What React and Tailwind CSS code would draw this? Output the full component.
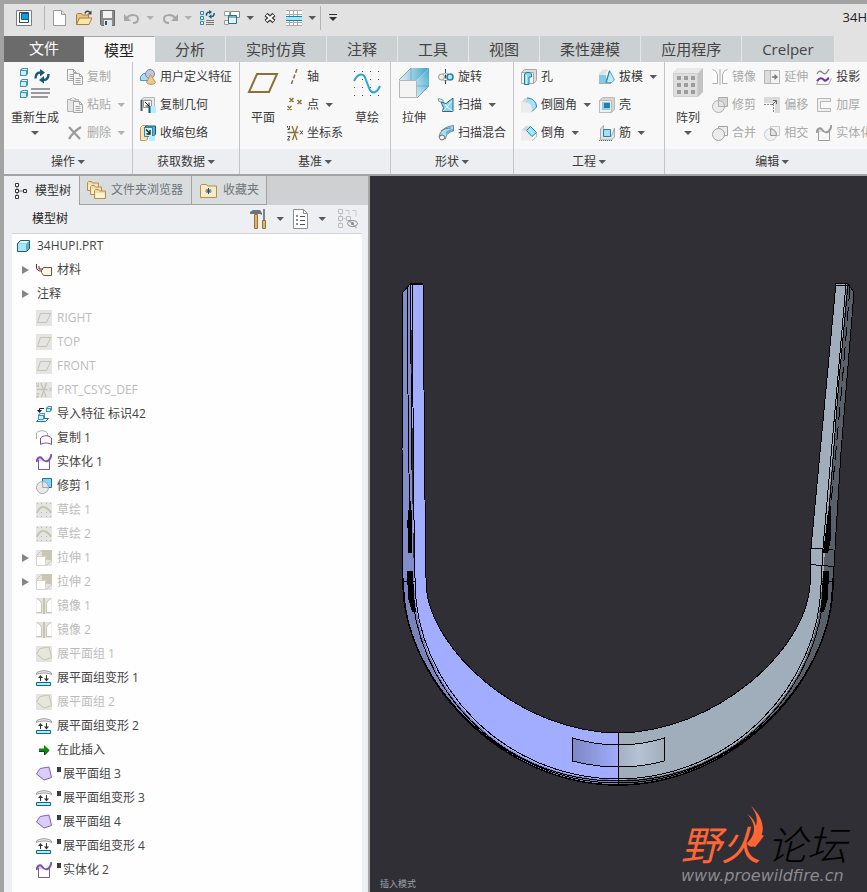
import React, { useState } from "react";
import clsx from "clsx";

function Svg({ size = 16, children }) {
  return (
    <svg width={size} height={size} viewBox={`0 0 ${size} ${size}`} fill="none" className="shrink-0" aria-hidden="true">
      {children}
    </svg>
  );
}

function Caret({ className = "text-[#595959]" }) {
  return (
    <svg width="10" height="8" viewBox="0 0 10 8" className={clsx("shrink-0", className)} aria-hidden="true">
      <path d="M2.500 2H10L6.250 6z" fill="currentColor" />
    </svg>
  );
}

/* ---------- shared glyphs ---------- */

const Cube = ({ x, y, s = 6 }) => (
  <g transform={`translate(${x} ${y})`}>
    <path d={`M0 2L2 0H${s + 2}V${s}L${s} ${s + 2}H0z`} fill="#3d93b8" />
    <path d={`M1 3H${s}V${s + 1}H1z`} fill="#c5f0fc" />
    <path d={`M1.500 2l1-1h${s - 1}l-1 1z`} fill="#fff" />
  </g>
);

const Cycle = ({ x, y, k = 1 }) => (
  <g transform={`translate(${x} ${y}) scale(${k})`} stroke="#17597a" strokeWidth="2.400" fill="none">
    <path d="M1.500 9.500C1.500 5.500 3 3.500 6.500 3.500M14.500 5c0 4-1.500 6-5 6" />
    <path d="M6 0l5 3.500L6 7.500zM10 14.500L5 11l5-4z" fill="#17597a" stroke="none" />
  </g>
);

const Sheet = ({ x, y, c = "#a5a5a5" }) => (
  <g transform={`translate(${x} ${y})`}>
    <path d="M.5.500h6l3 3v8h-9z" fill="#f5f5f5" stroke={c} />
    <path d="M6.500.500v3h3M2.500 5.500h5M2.500 7.500h5M2.500 9.500h5" stroke={c} />
  </g>
);

const Folder = ({ x = 0, y = 0 }) => (
  <g transform={`translate(${x} ${y})`}>
    <path d="M.5 9.500v-8l1-1h3l1 1.500h6v7.500z" fill="#f3dca4" stroke="#b08f56" />
    <path d="M1.500 9V4h9v5z" fill="#fdf3d3" />
  </g>
);

const Solidify = ({ c = "#7a55a5", f = "#ddd3ee" }) => (
  <Svg>
    <path d="M2 5c3-5 5 4 8 2 2-1 3-3 3-5v5H2z" fill={f} />
    <path d="M2.500 6v9.500h11V5" stroke={c} />
    <path d="M.5 8C1 4 4 1.500 6 4.500S9 8 11.500 7 15 3 15.500 0" stroke={c} strokeWidth="2" />
  </Svg>
);

const Trim = ({ fill = "#7fd6fb", line = "#20779b", circle = "#a9a9a9" }) => (
  <Svg>
    <path d="M6.500.500h9v9h-9z" fill={fill} stroke={line} />
    <circle cx="6.500" cy="9.500" r="6" fill="#e7e7e7" fillOpacity=".9" stroke={circle} />
    <path d="M6.500 4v5.500h6" stroke={circle} />
  </Svg>
);

const Flatten = () => (
  <Svg>
    <path d="M.5 4.500V3C4 0 12 0 15.500 3v1.500C12 2.500 4 2.500.5 4.500z" fill="#efefef" stroke="#9a9a9a" />
    <path d="M.5 12.500h14v3H.5z" fill="#a4ecff" stroke="#1a6685" />
    <path d="M4.500 6v5M10.500 5v5" stroke="#333" />
    <path d="M2 8l2.500-3L7 8zM8 8.500h5l-2.500 3z" fill="#333" />
  </Svg>
);

const Quilt = ({ off }) => (
  <Svg>
    {off && <path d="M0 0h16v16H0z" fill="#e4e4e4" />}
    <path d="M4 2.500L13 1l2.500 10.500L8 14 .5 8z" fill={off ? "#e6e6dd" : "#d7cdf6"} stroke={off ? "#c6c3af" : "#8660a8"} />
  </Svg>
);

const PlaneOff = () => (
  <Svg>
    <path d="M0 0h16v16H0z" fill="#e4e4e4" />
    <path d="M4.500 3.500h10l-4 9h-9z" stroke="#c6c3af" />
  </Svg>
);

const SketchOff = () => (
  <Svg>
    <path d="M0 0h16v16H0z" fill="#e4e4e4" />
    <path d="M1 1.500h1M5 1.500h1M10 1.500h1M14 1.500h1M1 14.500h1M5 14.500h1M10 14.500h1M14 14.500h1M5 10.500h1M10 10.500h1" stroke="#b5b5b5" />
    <path d="M1 11C4 3 10 3 15 11" stroke="#c6c3af" strokeWidth="2" />
  </Svg>
);

const ExtrudeOff = () => (
  <Svg>
    <path d="M0 0h16v16H0z" fill="#e4e4e4" />
    <path d="M6 0h10v10h-6V6H6z" fill="#c9c6b4" />
    <path d="M0 6l6-6M10 16l6-6" stroke="#c9c6b4" />
    <path d="M.5 6.500h9v9h-9z" fill="#fff" stroke="#d8d6c8" />
  </Svg>
);

const Mirror = ({ off, c = "#adadad" }) => (
  <Svg>
    {off && <path d="M0 0h16v16H0z" fill="#e4e4e4" />}
    <path d="M.5.500c3 1 5 3 5 6v8h-5M15.500.500c-3 1-5 3-5 6v8h5" fill="#fff" stroke={c} />
    <path d="M8 0v16" stroke={c} strokeWidth={off ? 2 : 1} />
  </Svg>
);

const CsysMark = ({ c = "#8c7037", t = "#4b4b4b", bg }) => (
  <Svg>
    {bg && <path d="M0 0h16v16H0z" fill={bg} />}
    <path d="M.5 7.500h11M5 1l5 14M10.500 1l-5 14" stroke={c} strokeWidth="1.300" />
    <path d="M.5 1v1.500l1 1 1-1V1M2.500 2.500v2h-2M.5 11.500h2.500L.5 15h2.500M13 5.500l3 4M16 5.500l-3 4" stroke={t} />
  </Svg>
);

/* ---------- quick access ---------- */

const qat = {
  screen: (
    <Svg>
      <path d="M.5.500h15v15H.5z" fill="#fff" stroke="#7c7c7c" />
      <path d="M3.500 2.500h9v10h-9z" fill="#fff" stroke="#3c4c55" />
      <path d="M5.500 3.500h7v6h-7z" fill="#0f9ddf" stroke="#135d80" />
    </Svg>
  ),
  doc: (
    <Svg>
      <path d="M1.500.500h8l4 4v11h-12z" fill="#fdfdfd" stroke="#9a9a9a" />
      <path d="M9.500.500v4h4" fill="#ddd" stroke="#9a9a9a" />
    </Svg>
  ),
  open: (
    <Svg>
      <path d="M.5 14.500V4.500l1-1h4l1 1.500h6v3" fill="#e9c77f" stroke="#a57f3c" />
      <path d="M.5 14.500L3.500 8H16l-3 6.500z" fill="#fbe5ad" stroke="#a57f3c" />
      <path d="M9 3.500C9.500 1 12 .5 14 2.500" stroke="#444" strokeWidth="1.500" />
      <path d="M11.500 4.500H15.500V.5z" fill="#444" />
    </Svg>
  ),
  save: (
    <Svg>
      <path d="M.5.500h14v15H1.500l-1-1z" fill="#8b8b8b" stroke="#6a6a6a" />
      <path d="M3 1h9v7H3z" fill="#f2f2f2" />
      <path d="M4 10h8v6H4z" fill="#dfe7ec" />
      <path d="M5 11h2v4H5z" fill="#4c4c4c" />
    </Svg>
  ),
  undo: (
    <Svg>
      <path d="M3 8c3-4 11-4 11 1 0 3-2 4-5 4" stroke="#a6a6a6" strokeWidth="2" />
      <path d="M0 4v7h7z" fill="#a6a6a6" />
    </Svg>
  ),
  redo: (
    <Svg>
      <path d="M13 8C10 4 2 4 2 9c0 3 2 4 5 4" stroke="#a6a6a6" strokeWidth="2" />
      <path d="M16 4v7H9z" fill="#a6a6a6" />
    </Svg>
  ),
  regen: (
    <Svg>
      <path d="M.5 1.500h3v3h-3zM.5 6.500h3v3h-3zM.5 11.500h3v3h-3z" fill="#e7fbff" stroke="#2b86ac" />
      <Cycle x={5.500} y={0} k={0.6} />
      <path d="M6 10.500h8M6 12.500h8M6 14.500h8" stroke="#777" />
    </Svg>
  ),
  windows: (
    <Svg>
      <path d="M.5 1.500h5v4h-5zM.5 10.500h4v4h-4z" fill="#fff" stroke="#9c9c9c" />
      <path d="M6.500 1.500h9v6h-9z" fill="#fff" stroke="#888" />
      <path d="M4.500 5.500h8v8h-8z" fill="#dff6fd" stroke="#1f7390" />
      <path d="M5 7h7" stroke="#1f7390" />
    </Svg>
  ),
  close: (
    <Svg>
      <path d="M4 4.500l8 7M12 4.500l-8 7" stroke="#3a3a3a" strokeWidth="4.500" />
      <path d="M4.500 5l7 6M11.500 5l-7 6" stroke="#fff" strokeWidth="2" />
    </Svg>
  ),
  grid: (
    <Svg>
      <path d="M0 0h16v16H0z" fill="#fff" />
      <path d="M0 .5h16M0 4.500h16M0 12.500h16M0 15.500h16M3.500 0v16M7.500 0v16M11.500 0v16" stroke="#ababab" />
      <path d="M0 6.500h16M0 10.500h16" stroke="#1785a9" />
      <path d="M0 7h16v3H0z" fill="#a6e5f8" />
    </Svg>
  ),
};

/* ---------- ribbon ---------- */

const icons = {
  copy: (
    <Svg>
      <Sheet x={0} y={0} />
      <Sheet x={6} y={4} />
    </Svg>
  ),
  paste: (
    <Svg>
      <path d="M.5 2.500h11v12H.5z" fill="#e6e6e6" stroke="#b4b4b4" />
      <path d="M3.500 3.500V1.500h1.500L6 .5l1 1h1.500v2z" fill="#f4f4f4" stroke="#b4b4b4" />
      <Sheet x={6} y={4} />
    </Svg>
  ),
  del: (
    <Svg>
      <path d="M2 2l11 12M14 2C9 5 5 9 2 14" stroke="#9a9a9a" strokeWidth="2.200" />
    </Svg>
  ),
  udf: (
    <Svg>
      <path d="M.5 7.500l3-3h7v7h-10z" fill="#a7dcf2" stroke="#4b97b8" />
      <circle cx="10" cy="5" r="4.500" fill="#c3c8de" stroke="#7d83a6" />
      <path d="M10.500 5.500l5 8c-1 2.500-8 2.500-9 0z" fill="#ecca8e" stroke="#b8935a" />
    </Svg>
  ),
  copyGeom: (
    <Svg>
      <path d="M1 3l3-2.500h10.500v9H11V3z" fill="#ebebeb" stroke="#b5b5b5" />
      <path d="M1.500 3v11" stroke="#4a555c" strokeWidth="2" />
      <path d="M3.500 3.500h8v7h-8z" fill="#fff" stroke="#999" />
      <path d="M5 5l4 4M9 5.500V9H5.500" stroke="#222" />
      <path d="M10 9h6v7h-6z" fill="#b4efff" />
      <path d="M9.500 9v7" stroke="#17597a" strokeWidth="2" />
    </Svg>
  ),
  shrink: (
    <Svg>
      <path d="M.5 2.500l2-2h5v14l-2 1h-5z" fill="#f6e3b8" stroke="#b99a63" />
      <path d="M4.500 2.500l1.500-1.500h9.500v8l-2 2z" fill="#58aed0" stroke="#17597a" />
      <path d="M4.500 2.500h8v9h-8z" fill="#c4f0fc" stroke="#3286a6" />
      <path d="M6 4.500l4 4M10 5v4H6.500" stroke="#222" strokeWidth="1.300" />
      <path d="M9 11h6v5H9z" fill="#b4efff" />
    </Svg>
  ),
  axis: (
    <Svg>
      <path d="M10 0L4 16" stroke="#8c7037" strokeWidth="1.500" strokeDasharray="4 2" />
    </Svg>
  ),
  points: (
    <Svg>
      <path d="M2.500 1l4 4M6.500 1l-4 4M10.500 3l4 4M14.500 3l-4 4M.5 9l4 4M4.500 9l-4 4" stroke="#8c7037" strokeWidth="1.500" />
    </Svg>
  ),
  csys: <CsysMark />,
  revolve: (
    <Svg>
      <circle cx="3.500" cy="8" r="3" fill="#eee" stroke="#999" />
      <circle cx="12" cy="8" r="3" fill="#b5e6f7" stroke="#1b7fa8" strokeWidth="1.500" />
      <path d="M4 5c2-1 6-1 8 0M4 11c2 1 6 1 8 0" stroke="#9fc0cc" />
      <path d="M7.500 0v16" stroke="#444" strokeDasharray="4 1.500" />
    </Svg>
  ),
  sweep: (
    <Svg>
      <path d="M.5 1.500l4.500 1.500v3l-4.500-2z" fill="#ddf1f7" stroke="#6aa3ba" />
      <path d="M3 5l5 1.500L15 1v13.500H4.500l1-4z" fill="#8fd2ea" stroke="#1c6f93" />
      <path d="M5 14l4-4 5.500 4M9 10l-2-3M9 10l5-6" stroke="#e6f8fd" />
    </Svg>
  ),
  blend: (
    <Svg>
      <path d="M1 12C2 6 6 2 15.500.500V6C11 7 8 9 7.500 14z" fill="#a9dcef" stroke="#5d8ba0" />
      <path d="M3 6c3-2 6-3 10-3" stroke="#777" />
      <path d="M8 7c2-2 4-3 7-3v2C11 7 8 9 8 12z" fill="#5fb3d3" />
      <circle cx="4" cy="12.500" r="2.500" fill="#fff" stroke="#666" />
    </Svg>
  ),
  hole: (
    <Svg>
      <path d="M.5 3.500l3-3h12v11l-3 3H.5z" fill="#ddd" stroke="#a8a8a8" />
      <path d="M.5 3.500h12v11H.5z" fill="#f4f4f4" stroke="#a8a8a8" />
      <path d="M3.500 15.500V5c1-2 6-2 7 0v3H8v7.500z" fill="#8adaf5" stroke="#1c7da2" />
      <path d="M5.500 15V6" stroke="#dff6fd" />
    </Svg>
  ),
  round: (
    <Svg>
      <path d="M0 5.500h6c3 1 5 4 5 10H0z" fill="#ececec" />
      <path d="M0 5.500L4 1h5L6 5.500z" fill="#d8d8d8" />
      <path d="M6 1c5-.5 9.500 3.500 9.500 9L11 14c0-5-2-8-6-8.500z" fill="#a8e1f5" />
      <path d="M6 1c5 0 9.500 3.500 9.500 9L11 14.500" stroke="#2681a5" />
    </Svg>
  ),
  chamfer: (
    <Svg>
      <path d="M0 5.500h6l5 5v5H0z" fill="#ececec" />
      <path d="M0 5.500L5 1h5L6 5.500z" fill="#d5d5d5" />
      <path d="M9.500 1.500l6 6-4.500 4-5.500-6z" fill="#9aeaff" stroke="#2681a5" />
      <path d="M15.500 8v4L11 15.500" stroke="#bbb" />
    </Svg>
  ),
  draft: (
    <Svg>
      <path d="M0 6V4l4-3.500h5L6 6z" fill="#e2e2e2" />
      <path d="M0 6h7v8H0z" fill="#7fcbe9" />
      <path d="M6.500 13.500l4-12 5 9.500-3 2.500z" fill="#bfe9f6" stroke="#5ba3c0" />
      <path d="M10.500 2l-3 11" stroke="#2b7fa5" />
      <path d="M0 14.500h12" stroke="#aaa" />
    </Svg>
  ),
  shell: (
    <Svg>
      <path d="M.5 3.500l3-3h12v12l-3 3H.5z" fill="#d4d4d4" stroke="#bababa" />
      <path d="M.5 3.500h12v12H.5z" fill="#f0f0f0" stroke="#bababa" />
      <path d="M3 5h8v8H3z" fill="#8fcfe6" />
      <path d="M5 6h6v5H5z" fill="#2680a5" />
    </Svg>
  ),
  rib: (
    <Svg>
      <path d="M1.500 14V4l3-3.500V11h8L15.500 3v9l-3 3H1z" fill="#e2e2e2" stroke="#aaa" />
      <path d="M4.500 4.500h7v7h-7z" fill="#9fe0f5" stroke="#2b7fa5" />
      <path d="M0 15.500h13" stroke="#666" strokeDasharray="1 1" />
    </Svg>
  ),
  mirror: <Mirror />,
  trim: <Trim fill="#d5d5d5" line="#aaa" circle="#b0b0b0" />,
  merge: (
    <Svg>
      <path d="M6.500 1.500h9v9h-3a6 6 0 0 0-6-6.500z" fill="#ececec" stroke="#a3a3a3" />
      <circle cx="6.500" cy="9.500" r="6" fill="#ececec" stroke="#a3a3a3" />
    </Svg>
  ),
  extend: (
    <Svg>
      <path d="M.5 1.500h15v13H.5z" fill="#f3f3f3" stroke="#b5b5b5" />
      <path d="M1 2h5v12H1z" fill="#dcdcdc" />
      <path d="M6.500 2v12" stroke="#b5b5b5" />
      <path d="M8 8h3" stroke="#777" strokeWidth="1.500" />
      <path d="M10.500 5v6L14 8z" fill="#777" />
    </Svg>
  ),
  offset: (
    <Svg>
      <path d="M0 0h16v16h-5V6H0z" fill="#dadada" />
      <path d="M0 7.500h9.500V16" stroke="#888" strokeDasharray="2 1" />
      <path d="M8 8l4-4M9 3.500h3.500V7" stroke="#666" />
    </Svg>
  ),
  intersect: (
    <Svg>
      <path d="M6.500 1.500h9v9h-9z" fill="#f3f3f3" stroke="#c9c9c9" />
      <circle cx="6.500" cy="9.500" r="6" fill="#efefef" fillOpacity=".6" stroke="#c9c9c9" />
      <path d="M6.500 4v6.500h6C12.500 7 10 4 6.500 4z" fill="#e2e2e2" stroke="#999" />
    </Svg>
  ),
  project: (
    <Svg>
      <path d="M1 5c2-4 4-3 6-1s4 0 6-4" stroke="#888" strokeWidth="1.300" />
      <path d="M.5 15.500L3 10.500M12.500 15.500l3-6M.5 15.500h12" stroke="#aaa" />
      <path d="M1 12c3-4 5-3 7-1s3-1 5-2" stroke="#6b2fb3" strokeWidth="2" />
    </Svg>
  ),
  thicken: (
    <Svg>
      <path d="M14.500 1.500H1.500v13h13v-3H4.500v-7h10z" fill="#f0f0f0" stroke="#b5b5b5" />
    </Svg>
  ),
  solidify: <Solidify c="#9b9b9b" f="#dcdcdc" />,
};

const bigIcons = {
  regen: (
    <Svg size={32}>
      <Cube x={1} y={1} />
      <Cube x={1} y={12} />
      <Cube x={1} y={23} />
      <Cycle x={15} y={2} />
      <path d="M12 22h19M12 26h19M12 30h17" stroke="#9a9a9a" strokeWidth="2" />
    </Svg>
  ),
  plane: (
    <Svg size={32}>
      <path d="M10 7h20l-8 18H2z" stroke="#8c7037" strokeWidth="2" />
    </Svg>
  ),
  sketch: (
    <Svg size={32}>
      <path
        d="M3 4.500h26M3 12.500h26M3 20.500h26M3 28.500h26"
        stroke="#555"
        strokeDasharray="1 7"
      />
      <path d="M3 14C7 6 13 5 15 13l3 8c3 7 8 5 11-2" stroke="#2fa5d6" strokeWidth="2" />
    </Svg>
  ),
  extrude: (
    <Svg size={32}>
      <defs>
        <linearGradient id="ext" x1="0" y1="0" x2="1" y2="0">
          <stop offset="0" stopColor="#dff4fb" />
          <stop offset="1" stopColor="#3f9fc4" />
        </linearGradient>
        <linearGradient id="extSide" x1="1" y1="0" x2="0" y2="1">
          <stop offset="0" stopColor="#4ea9cb" />
          <stop offset="1" stopColor="#c4ecf8" />
        </linearGradient>
      </defs>
      <path d="M1 13L13 1h18L19 13z" fill="url(#ext)" />
      <path d="M19 13L31 1v18L19 31z" fill="url(#extSide)" />
      <path d="M13 1v12M19 19h12" stroke="#2b8fb8" strokeOpacity=".5" />
      <path d="M1.500 13.500h17v17h-17z" fill="#f4f4f4" stroke="#b5b5b5" />
      <path d="M1 13L13 1M19 31l12-12" stroke="#9a9a9a" />
    </Svg>
  ),
  pattern: (
    <Svg size={32}>
      <path d="M1 6l5-5h25v24l-5 5z" fill="#c3c3c3" />
      <path d="M1 6l5-5h25l-5 5z" fill="#e9e9e9" />
      <path d="M1.500 6.500h24v23h-24z" fill="#dedede" stroke="#cfcfcf" />
      <path d="M7 9v18M14 9v18M21 9v18" stroke="#9c9c9c" strokeWidth="4" strokeDasharray="4 3" />
    </Svg>
  ),
};

const groups = [
  {
    name: "操作",
    cols: [
      { big: true, icon: "regen", label: "重新生成", menu: true },
      [
        { icon: "copy", label: "复制", off: true },
        { icon: "paste", label: "粘贴", off: true, menu: true },
        { icon: "del", label: "删除", off: true, menu: true },
      ],
    ],
  },
  {
    name: "获取数据",
    cols: [
      [
        { icon: "udf", label: "用户定义特征" },
        { icon: "copyGeom", label: "复制几何" },
        { icon: "shrink", label: "收缩包络" },
      ],
    ],
  },
  {
    name: "基准",
    cols: [
      { big: true, icon: "plane", label: "平面" },
      [
        { icon: "axis", label: "轴" },
        { icon: "points", label: "点", menu: true },
        { icon: "csys", label: "坐标系" },
      ],
      { big: true, icon: "sketch", label: "草绘" },
    ],
  },
  {
    name: "形状",
    cols: [
      { big: true, icon: "extrude", label: "拉伸" },
      [
        { icon: "revolve", label: "旋转" },
        { icon: "sweep", label: "扫描", menu: true },
        { icon: "blend", label: "扫描混合" },
      ],
    ],
  },
  {
    name: "工程",
    cols: [
      [
        { icon: "hole", label: "孔" },
        { icon: "round", label: "倒圆角", menu: true },
        { icon: "chamfer", label: "倒角", menu: true },
      ],
      [
        { icon: "draft", label: "拔模", menu: true },
        { icon: "shell", label: "壳" },
        { icon: "rib", label: "筋", menu: true },
      ],
    ],
  },
  {
    name: "编辑",
    cols: [
      { big: true, icon: "pattern", label: "阵列", menu: true },
      [
        { icon: "mirror", label: "镜像", off: true },
        { icon: "trim", label: "修剪", off: true },
        { icon: "merge", label: "合并", off: true },
      ],
      [
        { icon: "extend", label: "延伸", off: true },
        { icon: "offset", label: "偏移", off: true },
        { icon: "intersect", label: "相交", off: true },
      ],
      [
        { icon: "project", label: "投影" },
        { icon: "thicken", label: "加厚", off: true },
        { icon: "solidify", label: "实体化", off: true },
      ],
    ],
  },
];

const tabs = ["分析", "实时仿真", "注释", "工具", "视图", "柔性建模", "应用程序", "Crelper"];

function QuickButton({ icon, label, menu, off }) {
  return (
    <button type="button" aria-label={label} className="flex items-center gap-1">
      {qat[icon]}
      {menu && <Caret className={off ? "text-[#b0b0b0]" : "text-[#595959]"} />}
    </button>
  );
}

function QuickBar() {
  return (
    <header className="flex h-8 items-center overflow-hidden bg-[#e2e2e2] pb-1 pl-3">
      <QuickButton icon="screen" label="窗口" />
      <span className="ml-3 mr-[7px] h-6 w-px shrink-0 bg-[#b5b5b5]" />
      <div className="flex items-center gap-2">
        <QuickButton icon="doc" label="新建" />
        <QuickButton icon="open" label="打开" />
        <QuickButton icon="save" label="保存" />
        <QuickButton icon="undo" label="撤消" menu off />
        <QuickButton icon="redo" label="重做" menu off />
        <QuickButton icon="regen" label="重新生成" />
        <QuickButton icon="windows" label="窗口列表" menu />
        <QuickButton icon="close" label="关闭" />
        <QuickButton icon="grid" label="表" menu />
      </div>
      <span className="mr-2 ml-1 h-6 w-px shrink-0 bg-[#b5b5b5]" />
      <button type="button" aria-label="自定义">
        <svg width="8" height="8" viewBox="0 0 8 8" aria-hidden="true">
          <path d="M0 .5h8" stroke="#333" />
          <path d="M0 3h8L4 7z" fill="#333" />
        </svg>
      </button>
      <span className="ml-auto text-[13px] text-[#222]">34H</span>
    </header>
  );
}

function TabBar() {
  return (
    <nav className="flex h-[26px] overflow-hidden bg-[#e2e2e2] text-[15px] leading-6 whitespace-nowrap">
      <button type="button" className="bg-[#6b6b6b] px-[25px] pb-1 text-white">文件</button>
      <button type="button" className="border-t border-r border-t-[#a3a3a3] border-r-[#f8f8f8] bg-[#f8f8f8] px-5 text-[#222]">
        模型
      </button>
      {tabs.map((t) => (
        <button key={t} type="button" className="border-r border-[#e6e6e6] bg-[#cbd0d3] px-5 text-[#444]">
          {t}
        </button>
      ))}
    </nav>
  );
}

function BigButton({ icon, label, menu }) {
  return (
    <button type="button" className="flex min-w-8 flex-col items-center pt-1 text-[#3a3a3a]">
      {bigIcons[icon]}
      <span className="mt-[11px] leading-4">{label}</span>
      {menu && (
        <svg width="8" height="5" viewBox="0 0 8 5" className="mt-1 text-[#595959]" aria-hidden="true">
          <path d="M0 1h8L4 5z" fill="currentColor" />
        </svg>
      )}
    </button>
  );
}

function SmallButton({ icon, label, menu, off }) {
  return (
    <button
      type="button"
      disabled={off}
      className={clsx("flex h-7 items-center gap-1", off ? "text-[#a9a9a9]" : "text-[#3a3a3a]")}
    >
      {icons[icon]}
      <span>{label}</span>
      {menu && <Caret className={off ? "text-[#b0b0b0]" : "text-[#595959]"} />}
    </button>
  );
}

function Ribbon() {
  return (
    <div className="flex overflow-hidden border-b-2 border-[#a3a3a3] bg-[#f8f8f8] text-xs whitespace-nowrap">
      {groups.map((g) => (
        <section key={g.name} className="flex shrink-0 flex-col border-r border-[#c2c4c8]">
          <div className="flex h-[87px] gap-2 px-[7px] pt-px">
            {g.cols.map((c, i) =>
              c.big ? (
                <BigButton key={i} {...c} />
              ) : (
                <div key={i} className="flex flex-col items-start">
                  {c.map((b) => (
                    <SmallButton key={b.label} {...b} />
                  ))}
                </div>
              )
            )}
          </div>
          <button type="button" className="flex h-[25px] items-center justify-center bg-[#edeef1] text-[#3a3a3a]">
            {g.name}
            <Caret />
          </button>
        </section>
      ))}
    </div>
  );
}

/* ---------- model tree ---------- */

const treeIcons = {
  material: (
    <Svg>
      <path d="M.5 2v3c0 3 2 4 5 4" stroke="#6e1f1f" />
      <path d="M5.500 8.500l2-3h8v8h-8l-2-3z" fill="#fbf6e3" stroke="#5f5a45" />
      <path d="M3 4v3h4" stroke="#6e1f1f" />
    </Svg>
  ),
  plane: <PlaneOff />,
  csys: <CsysMark c="#c6c3af" t="#c6c3af" bg="#e4e4e4" />,
  imported: (
    <Svg>
      <Cube x={10} y={0} s={4} />
      <path d="M3.500 5V2.500H8" stroke="#222" />
      <path d="M1 4h5L3.500 7z" fill="#222" />
      <path d="M.5 15.500l3-3h9l-3 3z" fill="#d9f6fd" stroke="#1c6f93" />
      <Cube x={2} y={7} s={5} />
    </Svg>
  ),
  copy: (
    <Svg>
      <path d="M.5 9V3c3-3 8-3 11 0v3" stroke="#aaa" />
      <path d="M4.500 14.500V8c3-3 8-3 11 0v6.500c-3-2-8-2-11 0z" fill="#fff" stroke="#7a4f9d" />
    </Svg>
  ),
  solid: <Solidify />,
  trim: <Trim />,
  sketch: <SketchOff />,
  extrude: <ExtrudeOff />,
  mirror: <Mirror off c="#c6c3af" />,
  quiltOff: <Quilt off />,
  quilt: <Quilt />,
  flatten: <Flatten />,
  insert: (
    <Svg>
      <path d="M3 6.500h5V3l5.500 5L8 13.500V10H3z" fill="#0b8a0b" />
      <path d="M3 9.500h5.500v3.500L13 8.500" stroke="#173d17" />
    </Svg>
  ),
};

const items = [
  { icon: "material", label: "材料", open: true },
  { label: "注释", open: true },
  { icon: "plane", label: "RIGHT", off: true },
  { icon: "plane", label: "TOP", off: true },
  { icon: "plane", label: "FRONT", off: true },
  { icon: "csys", label: "PRT_CSYS_DEF", off: true },
  { icon: "imported", label: "导入特征 标识42" },
  { icon: "copy", label: "复制 1" },
  { icon: "solid", label: "实体化 1" },
  { icon: "trim", label: "修剪 1" },
  { icon: "sketch", label: "草绘 1", off: true },
  { icon: "sketch", label: "草绘 2", off: true },
  { icon: "extrude", label: "拉伸 1", off: true, open: true },
  { icon: "extrude", label: "拉伸 2", off: true, open: true },
  { icon: "mirror", label: "镜像 1", off: true },
  { icon: "mirror", label: "镜像 2", off: true },
  { icon: "quiltOff", label: "展平面组 1", off: true },
  { icon: "flatten", label: "展平面组变形 1" },
  { icon: "quiltOff", label: "展平面组 2", off: true },
  { icon: "flatten", label: "展平面组变形 2" },
  { icon: "insert", label: "在此插入" },
  { icon: "quilt", label: "展平面组 3", mark: true },
  { icon: "flatten", label: "展平面组变形 3", mark: true },
  { icon: "quilt", label: "展平面组 4", mark: true },
  { icon: "flatten", label: "展平面组变形 4", mark: true },
  { icon: "solid", label: "实体化 2", mark: true },
];

function TreeRow({ item, selected, onSelect }) {
  return (
    <li
      onClick={onSelect}
      aria-selected={selected}
      role="treeitem"
      className={clsx("flex h-6 items-center pl-2", item.off ? "text-[#bcbcbc]" : "text-[#444]")}
    >
      <span className="flex w-4 shrink-0 pl-[2px]">
        {item.open && (
          <svg width="8" height="10" viewBox="0 0 8 10" aria-hidden="true">
            <path d="M0 1l7 4-7 4z" fill="#858585" />
          </svg>
        )}
      </span>
      {item.icon && treeIcons[item.icon]}
      {item.mark && <span className="mb-[9px] ml-[5px] h-[5px] w-1 bg-[#3c3c3c]" />}
      <span className={item.mark ? "ml-[2px]" : item.icon ? "ml-[5px]" : "ml-px"}>{item.label}</span>
    </li>
  );
}

function TreePanel() {
  const [selected, setSelected] = useState(null);

  return (
    <aside className="flex w-[366px] shrink-0 flex-col border-r-2 border-[#a3a3a3] bg-[#edeff2] text-xs whitespace-nowrap">
      <div className="flex h-[29px] bg-[#cfd0d2]">
        <button type="button" className="flex items-center gap-1 border-r border-[#a3a3a3] bg-[#edeff2] pr-2 pl-[11px] text-[#333]">
          <Svg>
            <path d="M.5.500h3v3h-3zM.5 6.500h3v3h-3zM.5 12.500h3v3h-3zM8.500 6.500h3v3h-3z" fill="#fff" stroke="#333" />
            <path d="M2 4v2M2 10v2M4 8h4" stroke="#777" />
          </Svg>
          模型树
        </button>
        <button type="button" className="flex items-center gap-1 border-r border-b border-[#a3a3a3] bg-[#d9dddd] pr-2 pl-[7px] text-[#6e747c]">
          <Svg size={20}>
            <Folder x={0} y={1} />
            <Folder x={3} y={5} />
            <Folder x={7} y={9} />
          </Svg>
          文件夹浏览器
        </button>
        <button type="button" className="flex items-center gap-1 border-r border-b border-[#a3a3a3] bg-[#d9dddd] px-[7px] text-[#6e747c]">
          <Svg size={20}>
            <path d="M1.500 17.500v-12l1-1h5l1 1.500h9v11.500z" fill="#f9ebc4" stroke="#b08f56" />
            <path d="M9.500 8v6M6.500 11h6M7.500 9l4 4M11.500 9l-4 4" stroke="#17597a" />
          </Svg>
          收藏夹
        </button>
      </div>

      <div className="mr-[6px] ml-2 flex h-[29px] items-center border-b border-[#d2d5d9]">
        <h2 className="flex-1 pl-5 text-[#222]">模型树</h2>
        <button type="button" aria-label="设置" className="flex items-center gap-1">
          <Svg size={20}>
            <path d="M0 3l3-2h7l2 3v2l-2-1H0z" fill="#6c737c" />
            <path d="M4.500 5.500h3v14h-3z" fill="#e0b36c" stroke="#9b7236" />
            <path d="M14 0v12" stroke="#7b828a" strokeWidth="2" />
            <path d="M12.500 11.500h3v8h-3z" fill="#e0b36c" stroke="#9b7236" />
          </Svg>
          <Caret />
        </button>
        <button type="button" aria-label="显示" className="ml-2 flex items-center gap-1">
          <Svg size={20}>
            <path d="M1.500.500h10l4 4v15h-14z" fill="#fff" stroke="#8f8f8f" />
            <path d="M11.500.500v4h4" stroke="#8f8f8f" />
            <path d="M8 7.500h5M8 11.500h5M8 15.500h5" stroke="#555" />
            <path d="M4.500 6.500h1v1h-1zM4.500 10.500h1v1h-1zM4.500 14.500h1v1h-1z" stroke="#666" />
          </Svg>
          <Caret />
        </button>
        <button type="button" aria-label="隐藏" className="mr-1 ml-3" disabled>
          <Svg size={20}>
            <path d="M.5.500h4v4h-4zM.5 7.500h4v4h-4zM.5 14.500h4v4h-4zM8.500 7.500h4v4h-4z" stroke="#bdbdbd" />
            <path d="M7 1.500h4v4M14 1.500h4v6M2.500 5v2M2.500 12v2M5 9.500h3" stroke="#cbcbcb" />
            <ellipse cx="14.500" cy="14.500" rx="5" ry="3" fill="#eee" stroke="#888" />
            <path d="M10.500 11l8 8" stroke="#888" />
            <circle cx="14.500" cy="14.500" r="1.500" fill="#888" />
          </Svg>
        </button>
      </div>

      <ul role="tree" className="mr-[6px] ml-2 flex-1 bg-[#fefefe]">
        <li role="treeitem" className="flex h-6 items-center gap-1 pl-[5px] text-[#444]">
          <Svg>
            <path d="M.5 5.500l3-3h9v8l-3 3H.5z" fill="#54b0d6" stroke="#20607e" />
            <path d="M1 6h8v7H1z" fill="#a9e6fb" />
            <path d="M1.500 5.500l2.500-2.500h8l-2.500 2.500z" fill="#e3f8ff" />
          </Svg>
          34HUPI.PRT
        </li>
        {items.map((item) => (
          <TreeRow
            key={item.label}
            item={item}
            selected={selected === item.label}
            onSelect={() => setSelected(item.label)}
          />
        ))}
      </ul>
    </aside>
  );
}

/* ---------- 3d view ---------- */

// lower half of the hoop, drawn once and mirrored about x = 618
function Bow({ face, side }) {
  return (
    <g>
      <path d="M403 578V585C405 680 500 785 618 785V733C520 732 430 650 426 585V578z" fill={side} />
      <path d="M414 578V585C416 684 498 780 618 780V733C520 732 430 650 426 585V578z" fill={face} />
      <g fill="none" stroke="#000">
        <path d="M403 578V585C405 680 500 785 618 785" strokeWidth="1.500" />
        <path d="M404 592C408 680 500 783 618 783" />
        <path d="M412 578V585C414 683 496 781 618 781" />
        <path d="M415 578V585C417 682 500 778 618 779" />
        <path d="M426 578V585C430 650 520 732 618 733" />
      </g>
      <path d="M407 571h6l1 25 2 16h-4l-4-14z" />
    </g>
  );
}

function Viewport() {
  return (
    <main className="relative flex min-w-0 flex-1 overflow-hidden bg-[#302f35]">
      <svg viewBox="370 176 497 716" className="min-w-0 flex-1" shapeRendering="crispEdges" role="img" aria-label="34HUPI">
        <defs>
          <linearGradient id="plateL">
            <stop offset="0" stopColor="#7c87c4" />
            <stop offset="1" stopColor="#a0adfb" />
          </linearGradient>
          <linearGradient id="plateR">
            <stop offset="0" stopColor="#a3b0c2" />
            <stop offset=".45" stopColor="#b6c3d4" />
            <stop offset="1" stopColor="#a0adbb" />
          </linearGradient>
        </defs>

        {/* left arm */}
        <path d="M403 292L411 283V420L414 585H403L402 450z" fill="#838dca" />
        <path d="M411 283h12l1 120 1 100 1 82h-12l-2-210z" fill="#a2adff" />
        <path d="M403 585L402 450 403 292l8-9h12l1 107 1 110 1 85" fill="none" stroke="#000" />
        <path
          d="M411 284.500h12M407.500 287v54l1 105 1.500 80M410.500 284v80M411.500 374v96M412.500 284v70l1 105 1 120"
          fill="none"
          stroke="#000"
        />
        <path d="M408 510h4v43h-4zM407 520h5v8h-5zM409 501h2v10h-2z" />

        {/* right arm */}
        <path d="M845 283l9 9-13 160-8 135h-13l5-92z" fill="#596069" />
        <path d="M836 283h11l-22 265-2 37h-13l1-37z" fill="#a0adbb" />
        <path d="M836 283l-25 265-1 37M836 283h11l7 9-13 160-5 80-3 53M836 285.500h11" fill="none" stroke="#000" />
        <path d="M846 284l-23 264-2 37M848 285l-9 95-11 145" fill="none" stroke="#000" />
        <path d="M850 287l-8 98-12 130" fill="none" stroke="#000" strokeDasharray="14 6" />
        <path d="M828 511h3v28l-3 14h-5l3-24z" />

        <Bow face="#a2adff" side="#7a83bb" />
        <g transform="matrix(-1 0 0 1 1236 0)">
          <Bow face="#a0adbb" side="#596069" />
        </g>
        <path d="M403 581.500h12M811 548.500l22 1M810 564.500l24 2M822 581.500h11" stroke="#000" />

        {/* plate and split line */}
        <path d="M572 738Q596 745 618 745V767Q596 767 572 761z" fill="url(#plateL)" />
        <path d="M618 745Q642 745 665 738V761Q642 767 618 767z" fill="url(#plateR)" />
        <path
          d="M572.500 738Q596 745 618 745Q642 745 664.500 738V761Q642 767 618 767Q596 767 572.500 761zM618.500 733v52"
          fill="none"
          stroke="#000"
        />
      </svg>

      <p className="absolute bottom-0 left-[10px] text-[9px] leading-4 text-[#9aa3b0]">插入模式</p>

      <div className="absolute right-5 bottom-[6px] italic">
        <div className="flex font-['Liberation_Sans','Noto_Sans_CJK_SC',sans-serif] text-[40px] leading-10">
          <span className="text-[#ff6633]">野火</span>
          <span className="ml-[6px] font-light text-black">论坛</span>
        </div>
        <p className="font-['DejaVu_Sans',sans-serif] text-base leading-5 text-[#8b8b8f]">www.proewildfire.cn</p>
        <svg width="20" height="44" viewBox="0 0 20 44" className="absolute -top-5 left-[64px]" aria-hidden="true">
          <path
            d="M6 0c9 8 15 20 10 30-2 5-6 8-9 11-3-1-5-2-5-4 5-5 7-9 7-14 0-6-3-11-7-15 5 3 8 7 9 12C13 13 11 6 6 0z"
            fill="#ff6633"
          />
        </svg>
      </div>
    </main>
  );
}

export default function App() {
  return (
    <div className="flex min-h-screen flex-col border-t-4 border-l-4 border-[#a3a3a3] bg-[#edeff2] font-['Open_Sans','Noto_Sans_CJK_SC',sans-serif]">
      <QuickBar />
      <TabBar />
      <Ribbon />
      <div className="flex flex-1">
        <TreePanel />
        <Viewport />
      </div>
    </div>
  );
}
